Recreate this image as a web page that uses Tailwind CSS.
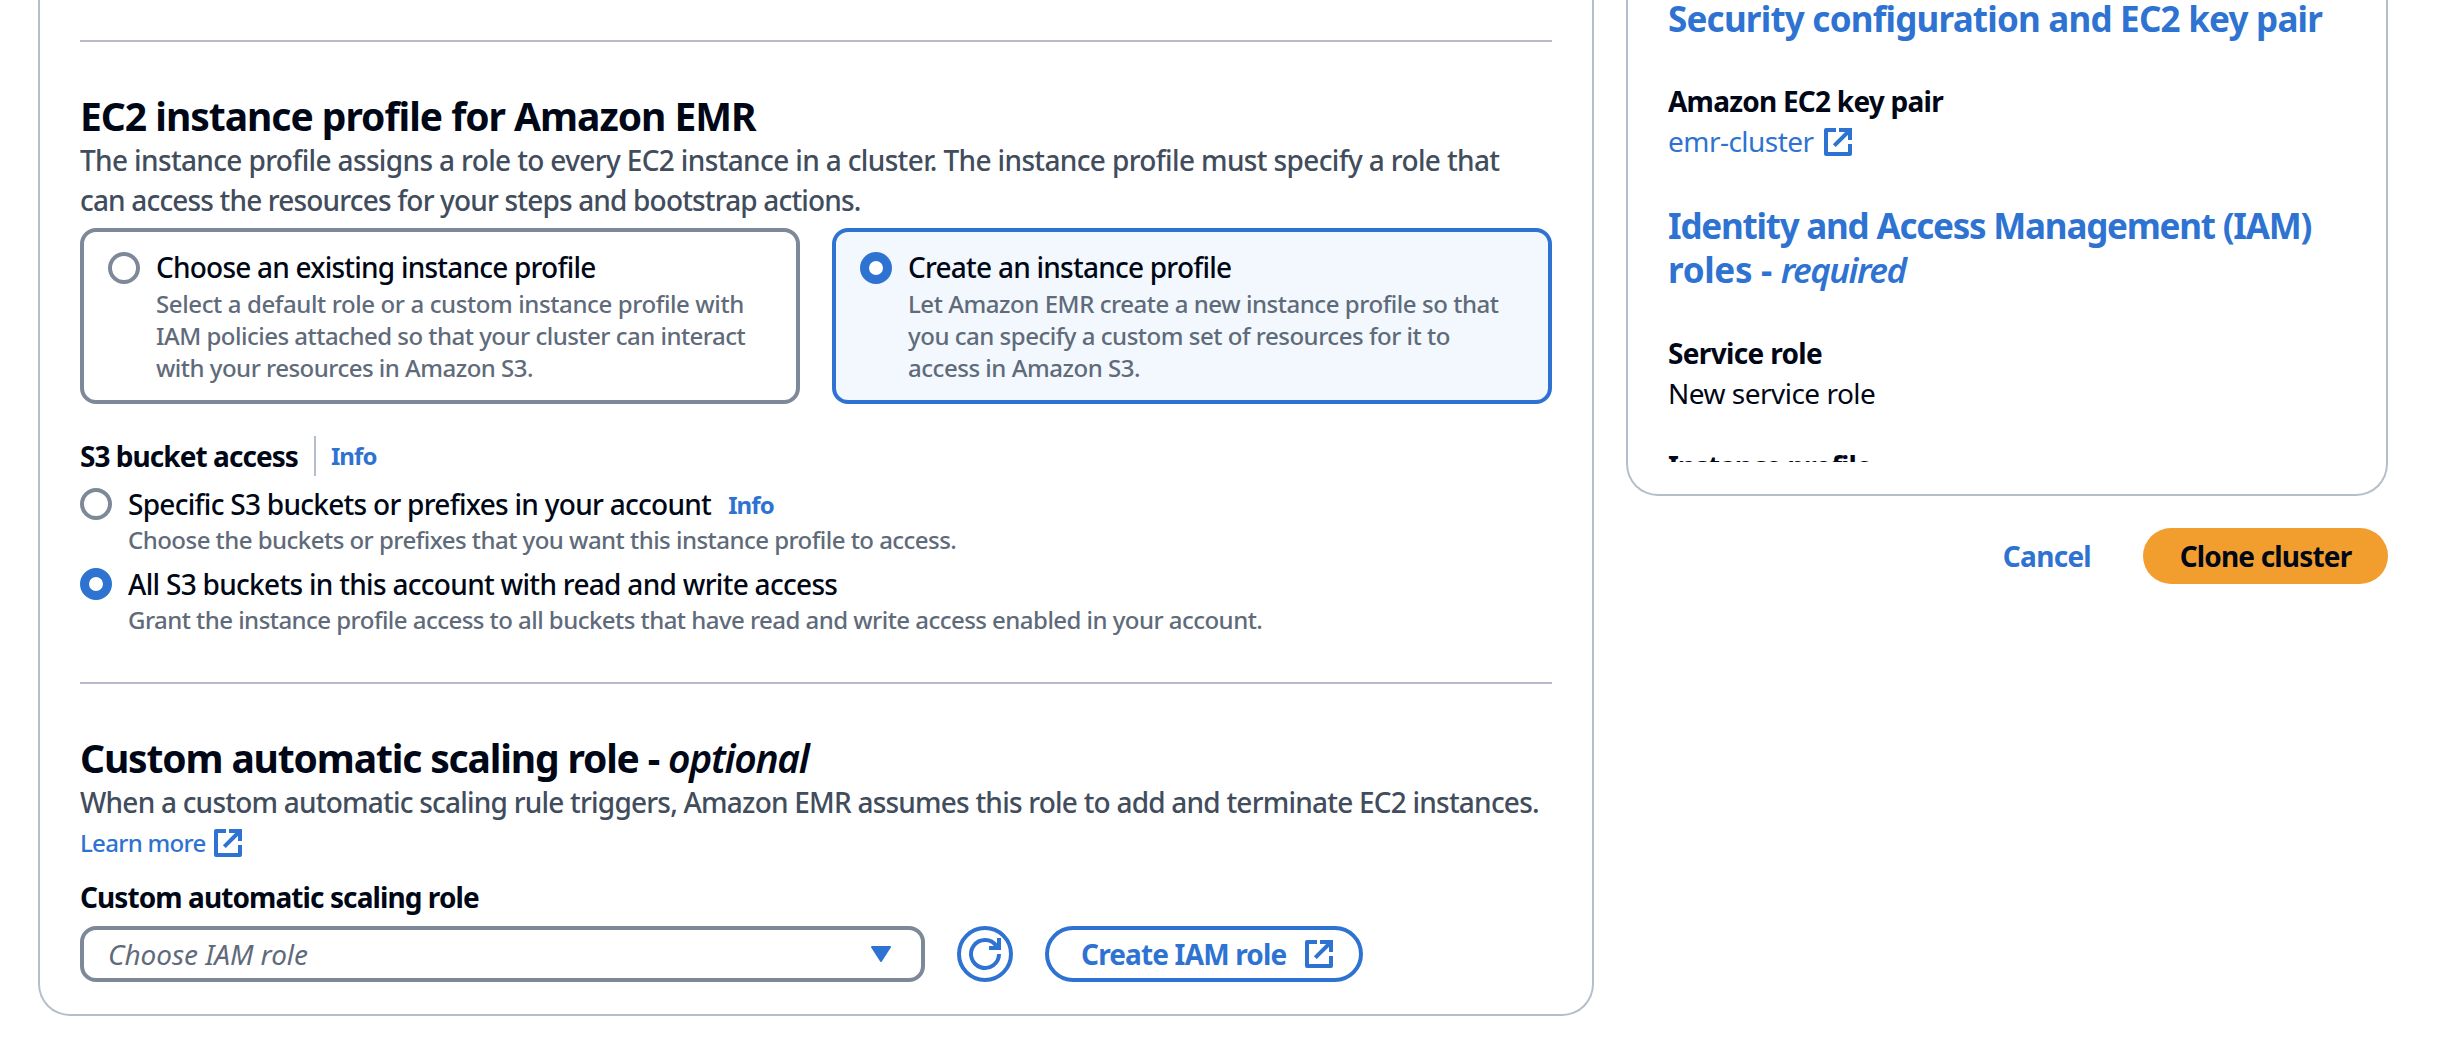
<!DOCTYPE html>
<html lang="en">
<head>
<meta charset="utf-8">
<title>Clone cluster</title>
<script src="https://cdn.jsdelivr.net/npm/@tailwindcss/browser@4"></script>
</head>
<body class="w-[2452px] h-[1040px] overflow-hidden bg-white font-['Noto_Sans',sans-serif] text-[28px] leading-10 text-[#000716] whitespace-nowrap">
<svg class="hidden">
  <symbol id="external" viewBox="0 0 28 28">
    <path d="M12 2H2V26H26V16" fill="none" stroke="currentColor" stroke-width="4" stroke-linejoin="round"/>
    <path d="M15 2H26V12M26 2L10.3 17.7" fill="none" stroke="currentColor" stroke-width="4"/>
  </symbol>
</svg>
<div class="flex items-start pl-[38px] gap-8">

  <main class="w-[1556px] h-[1016px] shrink-0 border-2 border-t-0 border-[#b6bec9] rounded-b-[32px] px-10 pt-10">
    <hr class="border-0 h-0.5 bg-[#b6bac9]">

    <section class="pt-[50px]">
      <h2 class="text-[39px] leading-[48px] font-bold tracking-[-1.02px]">EC2 instance profile for Amazon EMR</h2>
      <p class="text-[#414d5c] font-medium"><span class="block tracking-[-0.64px]">The instance profile assigns a role to every EC2 instance in a cluster. The instance profile must specify a role that</span><span class="block tracking-[-0.83px]">can access the resources for your steps and bootstrap actions.</span></p>

      <div class="grid grid-cols-2 gap-8 mt-2">
        <label class="flex gap-4 h-44 border-4 border-[#7d8998] rounded-2xl pl-6 pt-[15px]">
          <span class="size-8 mt-[5px] shrink-0 rounded-full border-4 border-[#7d8998]"></span>
          <span class="block">
            <span class="block font-medium tracking-[-0.78px]">Choose an existing instance profile</span>
            <span class="block mt-px text-2xl leading-8 text-[#5f6b7a] font-medium">
              <span class="block tracking-[-0.39px]">Select a default role or a custom instance profile with</span>
              <span class="block tracking-[-0.51px]">IAM policies attached so that your cluster can interact</span>
              <span class="block tracking-[-0.51px]">with your resources in Amazon S3.</span>
            </span>
          </span>
        </label>
        <label class="flex gap-4 h-44 border-4 border-[#2e73d1] bg-[#f2f8fd] rounded-2xl pl-6 pt-[15px]">
          <span class="size-8 mt-[5px] shrink-0 rounded-full border-[9.5px] border-[#2e73d1] bg-white"></span>
          <span class="block">
            <span class="block font-medium tracking-[-0.76px]">Create an instance profile</span>
            <span class="block mt-px text-2xl leading-8 text-[#5f6b7a] font-medium">
              <span class="block tracking-[-0.45px]">Let Amazon EMR create a new instance profile so that</span>
              <span class="block tracking-[-0.48px]">you can specify a custom set of resources for it to</span>
              <span class="block tracking-[-0.47px]">access in Amazon S3.</span>
            </span>
          </span>
        </label>
      </div>

      <div class="flex mt-8 h-10">
        <span class="font-bold tracking-[-0.95px]">S3 bucket access</span>
        <span class="w-0.5 h-10 ml-4 mr-[15px] bg-[#b6bec9]"></span>
        <a class="text-2xl leading-10 font-bold tracking-[-0.9px] text-[#2e73d1]">Info</a>
      </div>

      <div class="flex gap-4 mt-2 h-20">
        <span class="size-8 mt-1 shrink-0 rounded-full border-4 border-[#7d8998]"></span>
        <div>
          <div class="flex gap-[17px]"><span class="font-medium tracking-[-0.72px]">Specific S3 buckets or prefixes in your account</span><a class="text-2xl leading-[42px] h-10 font-bold tracking-[-0.9px] text-[#2e73d1]">Info</a></div>
          <p class="text-2xl leading-8 text-[#5f6b7a] font-medium tracking-[-0.53px]">Choose the buckets or prefixes that you want this instance profile to access.</p>
        </div>
      </div>
      <div class="flex gap-4 h-20">
        <span class="size-8 mt-1 shrink-0 rounded-full border-[9.5px] border-[#2e73d1] bg-white"></span>
        <div>
          <p class="font-medium tracking-[-0.7px]">All S3 buckets in this account with read and write access</p>
          <p class="text-2xl leading-8 text-[#5f6b7a] font-medium tracking-[-0.54px]">Grant the instance profile access to all buckets that have read and write access enabled in your account.</p>
        </div>
      </div>
    </section>

    <hr class="border-0 h-0.5 bg-[#b6bac9] mt-[38px]">

    <section class="pt-[50px]">
      <h2 class="text-[39px] leading-[48px] font-bold tracking-[-1.15px]">Custom automatic scaling role - <i class="font-semibold tracking-[-1.3px]">optional</i></h2>
      <p class="text-[#414d5c] font-medium tracking-[-0.78px]">When a custom automatic scaling rule triggers, Amazon EMR assumes this role to add and terminate EC2 instances.</p>
      <a class="flex items-center gap-2.5 h-[42px] text-2xl font-medium tracking-[-0.7px] text-[#2e73d1]"><span class="w-[124px]">Learn more</span><svg class="size-7"><use href="#external"/></svg></a>
      <p class="font-bold tracking-[-0.91px] mt-[13px]">Custom automatic scaling role</p>
      <div class="flex mt-[9px]">
        <div class="flex items-center justify-between w-[845px] h-14 border-4 border-[#7d8998] rounded-2xl pl-6 pr-[30px]">
          <span class="italic text-[#5f6b7a] tracking-[-0.05px]">Choose IAM role</span>
          <svg class="w-5 h-4 text-[#2e73d1]" viewBox="0 0 20 16"><path d="M1 1H19L10 15Z" fill="currentColor" stroke="currentColor" stroke-width="2" stroke-linejoin="round"/></svg>
        </div>
        <button class="size-14 ml-8 text-[#2e73d1]"><svg class="size-14" viewBox="0 0 56 56" fill="none" stroke="currentColor" stroke-width="4"><circle cx="28" cy="28" r="26"/><path d="M42 28A14 14 0 1 1 39.5 20"/><path d="M42 12V22H32"/></svg></button>
        <button class="flex items-center w-[318px] h-14 ml-8 rounded-full border-4 border-[#2e73d1] text-[#2e73d1] pl-8"><span class="w-[224px] text-left font-bold tracking-[-0.85px]">Create IAM role</span><svg class="size-7"><use href="#external"/></svg></button>
      </div>
    </section>
  </main>

  <aside class="w-[762px] shrink-0">
    <div class="h-[496px] border-2 border-t-0 border-[#b6bec9] rounded-b-[32px] px-10">
      <div class="h-[462px] overflow-hidden">
        <h3 class="-mt-[3px] text-[35px] leading-11 font-bold tracking-[-0.78px] text-[#2e73d1]">Security configuration and EC2 key pair</h3>
        <p class="mt-10 font-bold tracking-[-0.76px]">Amazon EC2 key pair</p>
        <a class="flex items-center gap-2 text-[#2e73d1] tracking-[-0.53px]"><span class="w-[148px]">emr-cluster</span><svg class="size-7 mt-0.5"><use href="#external"/></svg></a>
        <h3 class="mt-[43px] text-[35px] leading-11 font-bold text-[#2e73d1]"><span class="block tracking-[-1.22px]">Identity and Access Management (IAM)</span><span class="tracking-[-0.3px]">roles - </span><i class="font-semibold tracking-[-1.5px]">required</i></h3>
        <p class="mt-[41px] font-bold tracking-[-0.66px]">Service role</p>
        <p class="tracking-[-0.51px]">New service role</p>
        <p class="mt-[33px] font-bold tracking-[-1.05px]">Instance profile</p>
      </div>
    </div>
    <div class="flex items-center justify-end mt-8">
      <button class="mr-[52px] pb-px font-bold tracking-[-0.72px] text-[#2e73d1]">Cancel</button>
      <button class="w-[245px] h-14 pb-px rounded-full bg-[#f19e2f] font-bold tracking-[-0.83px]">Clone cluster</button>
    </div>
  </aside>
</div>
</body>
</html>
